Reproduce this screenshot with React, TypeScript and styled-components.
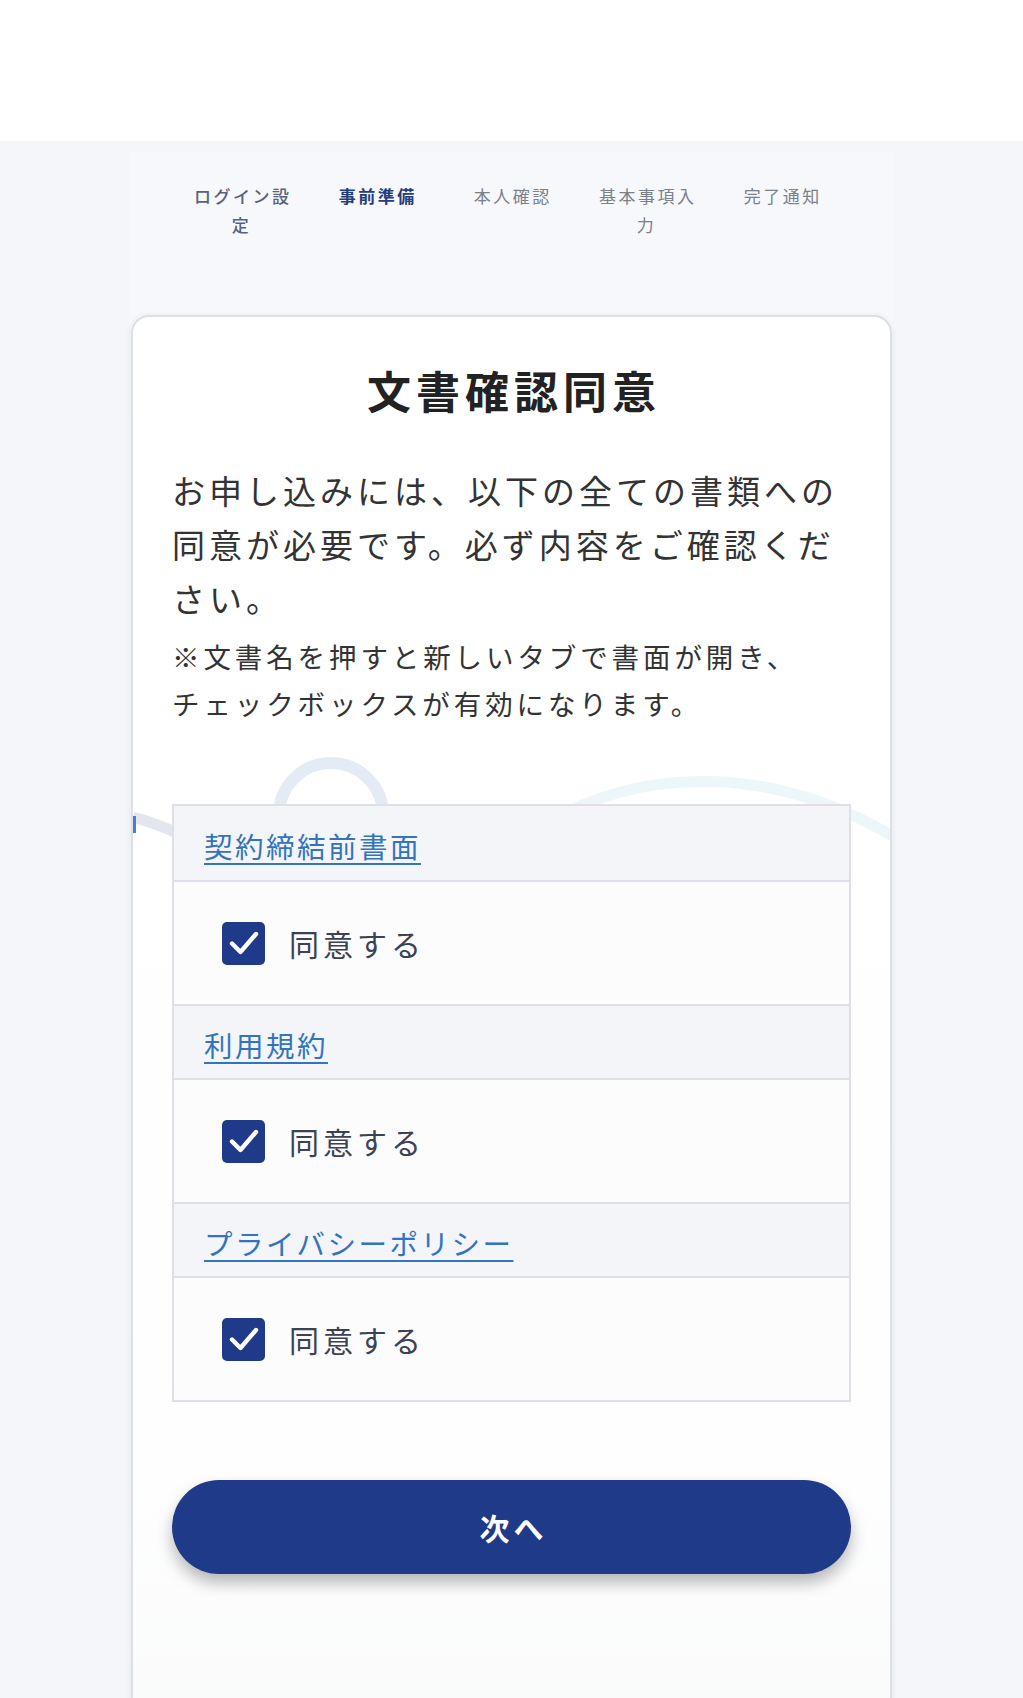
import React from "react";
import styled, { createGlobalStyle } from "styled-components";

const Global = createGlobalStyle`
  html, body { margin: 0; padding: 0; }
  body {
    background: #f4f6fa;
    font-family: "Noto Sans CJK JP", "Noto Sans", sans-serif;
    color: #333;
  }
`;

const Page = styled.div`
  height: 1698px;
  overflow: hidden;
  display: flex;
  flex-direction: column;
`;

const TopBar = styled.header`
  height: 141px;
  background: #ffffff;
  flex: none;
`;

const Main = styled.main`
  width: 763px;
  margin: 11px auto 0;
  background: #f6f8fb;
  flex: 1;
  display: flex;
  flex-direction: column;
`;

const Steps = styled.nav`
  display: flex;
  justify-content: center;
  gap: 35px;
  padding-top: 29px;
  height: 133px;
  box-sizing: border-box;
`;

const Step = styled.div<{ $state: "done" | "current" | "todo" }>`
  width: 100px;
  text-align: center;
  font-size: 17px;
  line-height: 29px;
  letter-spacing: 2.5px;
  text-indent: 2.5px;
  font-weight: ${(p) => (p.$state === "current" ? 700 : p.$state === "done" ? 500 : 400)};
  color: ${(p) =>
    p.$state === "current" ? "#263d7c" : p.$state === "done" ? "#59627a" : "#7b8089"};
`;

const Card = styled.section`
  position: relative;
  margin: 30px auto 0;
  width: 761px;
  box-sizing: border-box;
  background: linear-gradient(#ffffff 0%, #fefefe 75%, #f8f9fa 100%);
  border: 2px solid #dcdfe5;
  border-radius: 18px;
  box-shadow: 0 1px 6px rgba(0, 0, 0, 0.08);
  padding: 43px 39px 300px;
  overflow: hidden;
`;

const Deco = styled.svg`
  position: absolute;
  left: 0;
  top: 0;
  width: 761px;
  height: 700px;
  pointer-events: none;
`;

const Content = styled.div`
  position: relative;
  z-index: 1;
  display: flex;
  flex-direction: column;
`;

const Title = styled.h1`
  margin: 0;
  text-align: center;
  font-size: 44px;
  line-height: 60px;
  letter-spacing: 5px;
  text-indent: 5px;
  font-weight: 700;
  color: #222;
`;

const Lead = styled.p`
  margin: 43px 0 0;
  font-size: 33px;
  line-height: 54px;
  letter-spacing: 4px;
  color: #333;
  white-space: nowrap;
`;

const Note = styled.p`
  margin: 8px 0 0;
  font-size: 27.5px;
  line-height: 47px;
  letter-spacing: 3.9px;
  color: #333;
  white-space: nowrap;
`;

const DocTable = styled.div`
  margin-top: 77px;
  border: 2px solid #dde0e6;
  display: flex;
  flex-direction: column;
`;

const DocHead = styled.div<{ $first?: boolean }>`
  height: 74px;
  box-sizing: border-box;
  border-top: ${(p) => (p.$first ? "none" : "2px solid #dde0e6")};
  background: #f3f5f9;
  display: flex;
  align-items: center;
  padding: 4px 0 0 30px;
`;

const DocLink = styled.a`
  font-size: 28.5px;
  letter-spacing: 2.5px;
  color: #3474bd;
  text-decoration: underline;
  text-underline-offset: 5px;
  text-decoration-thickness: 1.5px;
`;

const CheckRow = styled.label`
  height: 124px;
  box-sizing: border-box;
  border-top: 2px solid #dde0e6;
  background: #fcfcfd;
  display: flex;
  align-items: center;
  gap: 24px;
  padding-left: 48px;
`;

const Box = styled.span`
  width: 43px;
  height: 43px;
  border-radius: 5px;
  background: #1f3a89;
  display: flex;
  align-items: center;
  justify-content: center;
  flex: none;
`;

const AgreeText = styled.span`
  font-size: 30px;
  letter-spacing: 4px;
  color: #3b4253;
`;

const NextButton = styled.button`
  margin-top: 78px;
  height: 94px;
  border: none;
  border-radius: 47px;
  background: #1f3a89;
  color: #fff;
  font-family: inherit;
  font-size: 30px;
  font-weight: 700;
  letter-spacing: 4px;
  text-indent: 4px;
  box-shadow: 0 9px 16px rgba(0, 0, 0, 0.28);
`;

const Check = () => (
  <svg width="30" height="26" viewBox="0 0 30 26">
    <path d="M3 13.5 L11.5 22 L27 4" fill="none" stroke="#fff" strokeWidth="4.4" strokeLinecap="round" strokeLinejoin="round" />
  </svg>
);

const docs = ["契約締結前書面", "利用規約", "プライバシーポリシー"];

export default function App() {
  return (
    <>
      <Global />
      <Page>
        <TopBar />
        <Main>
          <Steps>
            <Step $state="done">ログイン設定</Step>
            <Step $state="current">事前準備</Step>
            <Step $state="todo">本人確認</Step>
            <Step $state="todo">基本事項入力</Step>
            <Step $state="todo">完了通知</Step>
          </Steps>
          <Card>
            <Deco viewBox="0 0 761 700">
              <circle cx="198" cy="498" r="52" fill="none" stroke="#e5ebf4" strokeWidth="12" />
              <path d="M0 500 Q 30 508 70 528" fill="none" stroke="#e3e6ee" strokeWidth="11" />
              <path d="M410 508 C 510 448, 640 448, 761 520" fill="none" stroke="#edf7fa" strokeWidth="11" />
              <rect x="0" y="499" width="3" height="17" fill="#4a7fd0" />
              <rect x="758" y="506" width="3" height="16" fill="#6aa6e8" />
            </Deco>
            <Content>
              <Title>文書確認同意</Title>
              <Lead>
                お申し込みには、以下の全ての書類への
                <br />
                同意が必要です。必ず内容をご確認くだ
                <br />
                さい。
              </Lead>
              <Note>
                ※文書名を押すと新しいタブで書面が開き、
                <br />
                チェックボックスが有効になります。
              </Note>
              <DocTable>
                {docs.map((d, i) => (
                  <React.Fragment key={d}>
                    <DocHead $first={i === 0}>
                      <DocLink href="#">{d}</DocLink>
                    </DocHead>
                    <CheckRow>
                      <Box>
                        <Check />
                      </Box>
                      <AgreeText>同意する</AgreeText>
                    </CheckRow>
                  </React.Fragment>
                ))}
              </DocTable>
              <NextButton>次へ</NextButton>
            </Content>
          </Card>
        </Main>
      </Page>
    </>
  );
}
